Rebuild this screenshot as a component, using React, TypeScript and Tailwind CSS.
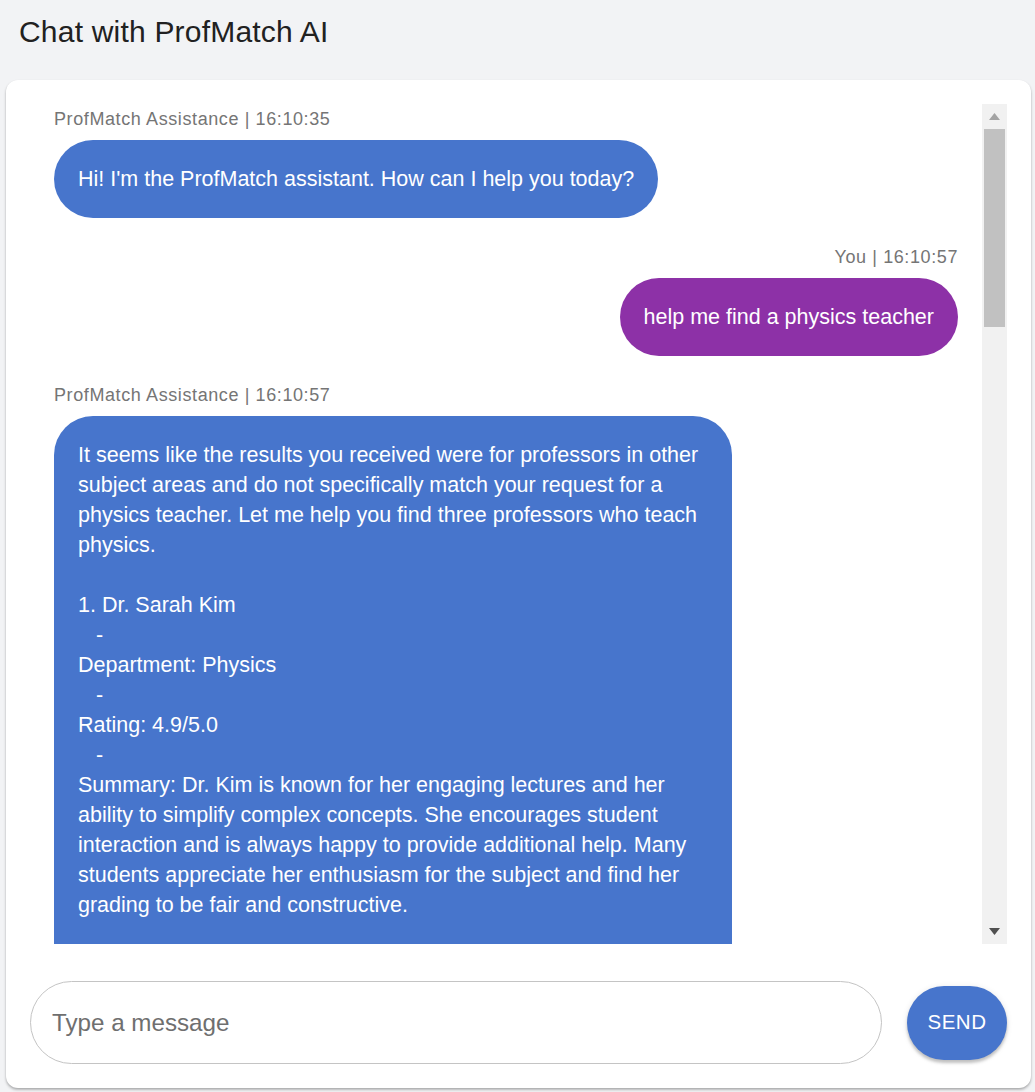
import React from "react";

type Msg = {
  from: "bot" | "user";
  time: string;
  text: string;
};

const messages: Msg[] = [
  {
    from: "bot",
    time: "16:10:35",
    text: "Hi! I'm the ProfMatch assistant. How can I help you today?",
  },
  { from: "user", time: "16:10:57", text: "help me find a physics teacher" },
  {
    from: "bot",
    time: "16:10:57",
    text:
      "It seems like the results you received were for professors in other subject areas and do not specifically match your request for a physics teacher. Let me help you find three professors who teach physics.\n\n1. Dr. Sarah Kim\n   -\nDepartment: Physics\n   -\nRating: 4.9/5.0\n   -\nSummary: Dr. Kim is known for her engaging lectures and her ability to simplify complex concepts. She encourages student interaction and is always happy to provide additional help. Many students appreciate her enthusiasm for the subject and find her grading to be fair and constructive.\n\n2. Dr. Michael Chen\n   -\nDepartment: Physics",
  },
];

const Bubble = ({ msg }: { msg: Msg }) => {
  const isUser = msg.from === "user";
  return (
    <div className={`flex flex-col mb-6 ${isUser ? "items-end" : "items-start"}`}>
      <span className="text-[18px] leading-[30px] tracking-[0.6px] text-[#757575] mb-[6px]">
        {isUser ? "You" : "ProfMatch Assistance"} | {msg.time}
      </span>
      <div
        className={`max-w-[75%] px-6 py-6 rounded-[39px] text-white text-[21.5px] leading-[30px] whitespace-pre-wrap ${
          isUser ? "bg-[#8d31a7]" : "bg-[#4775cc]"
        }`}
      >
        {msg.text}
      </div>
    </div>
  );
};

const ScrollBar = () => (
  <div className="w-[25px] shrink-0 bg-[#f1f1f1] flex flex-col">
    <div className="h-[25px] flex items-center justify-center">
      <svg width="11" height="7" viewBox="0 0 11 7">
        <polygon points="5.5,0 11,7 0,7" fill="#a3a3a3" />
      </svg>
    </div>
    <div className="h-[198px] mx-[2px] bg-[#c1c1c1]" />
    <div className="flex-1" />
    <div className="h-[25px] flex items-center justify-center">
      <svg width="11" height="7" viewBox="0 0 11 7">
        <polygon points="0,0 11,0 5.5,7" fill="#505050" />
      </svg>
    </div>
  </div>
);

export default function App() {
  return (
    <div className="min-h-[1092px] bg-[#f2f3f5] font-['Liberation_Sans',Arial,sans-serif]">
      <div className="pt-[14px] pb-[30px] px-[19px]">
        <h1 className="text-[30px] leading-[36px] text-[#212121] tracking-[0.2px]">
          Chat with ProfMatch AI
        </h1>
      </div>
      <div className="ml-[6px] w-[1025px] bg-white rounded-[12px] p-6 shadow-[0_2px_3px_rgba(0,0,0,0.22),0_1px_2px_rgba(0,0,0,0.12)]">
        <div className="flex h-[840px]">
          <div className="flex-1 overflow-hidden px-6">
            {messages.map((m, i) => (
              <Bubble key={i} msg={m} />
            ))}
          </div>
          <ScrollBar />
        </div>
        <div className="flex items-center gap-[25px] mt-[37px]">
          <input
            type="text"
            placeholder="Type a message"
            className="flex-1 h-[83px] rounded-full border border-[#c4c4c4] pl-[21px] pr-6 text-[24.2px] text-[#212121] placeholder:text-[#6f6f6f] outline-none"
          />
          <button className="w-[100px] h-[74px] rounded-full bg-[#4775cc] text-white text-[20.5px] tracking-[0.5px] shadow-[0_3px_3px_rgba(0,0,0,0.2),0_1px_6px_rgba(0,0,0,0.1)]">
            SEND
          </button>
        </div>
      </div>
    </div>
  );
}
